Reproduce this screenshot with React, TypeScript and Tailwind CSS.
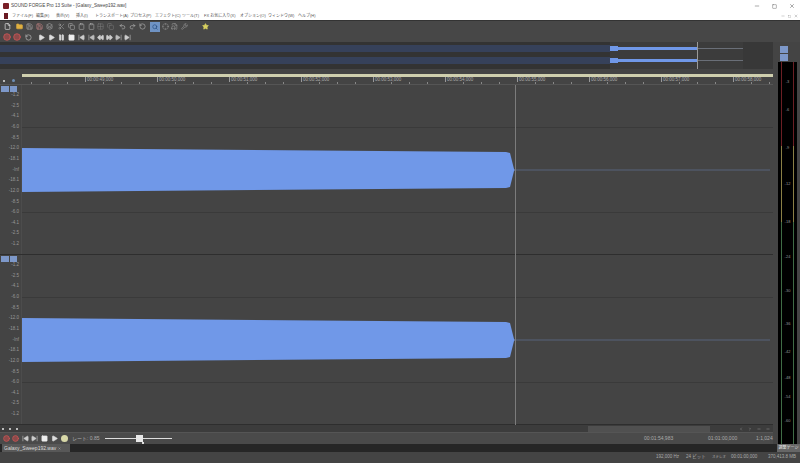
import { ChevronLeft, ChevronRight, Copy, Crosshair, File, FileAudio, Folder, Minus, Pause, Play, Redo2, RotateCcw, Save, Scissors, SkipBack, SkipForward, Square, Undo2, X, Clipboard, Rewind, FastForward, Circle, Search, Wrench, Layers, Grid2x2, Star } from "lucide-react";

const menus = [
  ["ファイル(F)", "w-[24px]"],
  ["編集(E)", "w-[20px]"],
  ["表示(V)", "w-[20px]"],
  ["挿入(I)", "w-[19px]"],
  ["トランスポート(A)", "w-[35px]"],
  ["プロセス(P)", "w-[25px]"],
  ["エフェクト(C)", "w-[27px]"],
  ["ツール(T)", "w-[22px]"],
  ["FX お気に入り(X)", "w-[36px]"],
  ["オプション(O)", "w-[28px]"],
  ["ウィンドウ(W)", "w-[30px]"],
  ["ヘルプ(H)", "w-[24px]"],
];

const rulerTimes = ["", "00:00:49,000", "00:00:50,000", "00:00:51,000", "00:00:52,000", "00:00:53,000", "00:00:54,000", "00:00:55,000", "00:00:56,000", "00:00:57,000", "00:00:58,000"];
const dbLabels = ["-1.2", "-2.5", "-4.1", "-6.0", "-8.5", "-12.0", "-18.1", "-Inf", "-18.1", "-12.0", "-8.5", "-6.0", "-4.1", "-2.5", "-1.2"];
const meterTicks = [
  { y: 18, label: "-3" }, { y: 46, label: "-6" }, { y: 84, label: "-9" }, { y: 120, label: "-12" },
  { y: 158, label: "-18" }, { y: 193, label: "-24" }, { y: 227, label: "-30" }, { y: 260, label: "-36" },
  { y: 288, label: "-42" }, { y: 314, label: "-48" }, { y: 333, label: "-54" }, { y: 357, label: "-60" },
];

function Channel() {
  return (
    <div className="relative flex h-[170px] border-b border-[#2e2e2e] bg-[#444444]">
      <div className="absolute left-[1px] top-[1px] flex gap-[1px]">
        <div className="h-[6px] w-[8px] bg-[#7d98c9]" />
        <div className="h-[6px] w-[7px] bg-[#7d98c9]" />
      </div>
      <div className="flex w-[22px] shrink-0 flex-col border-r border-[#4c4c4c] pt-[5px]">
        {dbLabels.map((l, i) => (
          <div key={i} className="flex h-[10.66px] items-center justify-end pr-[2px] text-[4.5px] text-[#989898]">{l}</div>
        ))}
      </div>
      <svg width="751" height="170" viewBox="0 0 751 170" className="block">
        <line x1="0" y1="42.5" x2="751" y2="42.5" stroke="#3a3a3a" />
        <line x1="0" y1="127.5" x2="751" y2="127.5" stroke="#3a3a3a" />
        <line x1="493" y1="85" x2="748" y2="85" stroke="#56637a" />
        <path d="M0 63 L484 67 L488 68 L492 84 L493 85 L492 86 L488 102 L484 103 L0 107 Z" fill="#7098e8" />
      </svg>
    </div>
  );
}

export default function App() {
  const ic = "h-[7px] w-[7px] shrink-0";
  return (
    <div className="flex h-[463px] w-[800px] flex-col overflow-hidden bg-[#444444] font-['Liberation_Sans','Noto_Sans_CJK_JP',sans-serif] text-[#c8c8c8]">
      {/* title + menu */}
      <div className="flex h-[12px] items-center bg-white pl-[3px] pr-[5px] text-[4.6px] text-[#444]">
        <div className="mr-[2px] h-[6px] w-[6px] rounded-[1px] bg-[#7a1f28]" />
        <span>SOUND FORGE Pro 13 Suite - [Galaxy_Sweep192.wav]</span>
        <div className="ml-auto flex items-center gap-[12px] text-[#555]">
          <Minus className="h-[6px] w-[6px]" />
          <Square className="h-[5px] w-[5px]" />
          <X className="h-[6px] w-[6px]" />
        </div>
      </div>
      <div className="flex h-[8px] items-center bg-white pl-[4px] pr-[2px] text-[4px] leading-none text-[#555]">
        <div className="mr-[4px] h-[6px] w-[4px] bg-[#6a1a22]" />
        {menus.map(([m, w]) => (
          <span key={m} className={`whitespace-nowrap ${w}`}>{m}</span>
        ))}
        <div className="ml-auto flex items-center gap-[3px] text-[#777]">
          <Minus className="h-[4px] w-[4px]" />
          <Square className="h-[3px] w-[3px]" />
          <X className="h-[4px] w-[4px]" />
        </div>
      </div>

      {/* toolbars */}
      <div className="flex h-[12px] items-center border-t border-[#333] bg-[#474747] pl-[4px]">
        <File className={`${ic} mr-[5px] text-white`} />
        <Folder className={`${ic} mr-[3px] fill-[#e0b040] text-[#e0b040]`} />
        <Save className={`${ic} mr-[3px] text-[#aaa]`} />
        <Save className={`${ic} mr-[3px] text-[#d08a8a]`} />
        <Layers className={`${ic} mr-[5px] text-[#aaa]`} />
        <Scissors className={`${ic} mr-[3px] text-[#999]`} />
        <Copy className={`${ic} mr-[3px] text-[#aaa]`} />
        <Clipboard className={`${ic} mr-[3px] text-[#aaa]`} />
        <Clipboard className={`${ic} mr-[2px] text-[#aaa]`} />
        <Grid2x2 className={`${ic} mr-[3px] text-[#777]`} />
        <Copy className={`${ic} mr-[5px] text-[#777]`} />
        <Undo2 className={`${ic} mr-[3px] text-[#bbb]`} />
        <Redo2 className={`${ic} mr-[3px] text-[#bbb]`} />
        <RotateCcw className={`${ic} mr-[4px] text-[#bbb]`} />
        <div className="mr-[2px] flex h-[10px] w-[10px] items-center justify-center bg-[#6f93c4]">
          <Search className="h-[6px] w-[6px] text-[#123a70]" />
        </div>
        <Crosshair className={`${ic} mr-[2px] text-[#888]`} />
        <FileAudio className={`${ic} mr-[3px] text-[#999]`} />
        <Wrench className={`${ic} mr-[14px] text-[#999]`} />
        <Star className={`${ic} fill-[#d8d060] text-[#d8d060]`} />
      </div>
      <div className="flex h-[10px] items-center bg-[#474747] pl-[3px]">
        <Circle className="mr-[2px] h-[8px] w-[8px] fill-[#8c4a4a] text-[#e05a5a]" />
        <Circle className="mr-[4px] h-[8px] w-[8px] fill-[#8c4a4a] text-[#e05a5a]" />
        <RotateCcw className={`${ic} mr-[6px] text-[#ccc]`} />
        <Play className={`${ic} mr-[3px] fill-[#ddd] text-[#ddd]`} />
        <Play className={`${ic} mr-[3px] fill-[#ddd] text-[#ddd]`} />
        <Pause className={`${ic} mr-[3px] fill-[#ddd] text-[#ddd]`} />
        <Square className={`${ic} mr-[3px] fill-[#eee] text-[#eee]`} />
        <SkipBack className={`${ic} mr-[3px] fill-[#ccc] text-[#ccc]`} />
        <SkipBack className={`${ic} mr-[2px] fill-[#bbb] text-[#bbb]`} />
        <Rewind className={`${ic} mr-[2px] fill-[#ccc] text-[#ccc]`} />
        <FastForward className={`${ic} mr-[2px] fill-[#ccc] text-[#ccc]`} />
        <SkipForward className={`${ic} mr-[2px] fill-[#bbb] text-[#bbb]`} />
        <SkipForward className={`${ic} fill-[#ccc] text-[#ccc]`} />
      </div>

      <div className="flex h-[402px]">
        {/* left: overview, ruler, channels */}
        <div className="flex w-[773px] flex-col">
          <svg width="773" height="27" viewBox="0 0 773 27" className="block shrink-0">
            <rect width="773" height="27" fill="#333333" />
            <rect y="3" width="610" height="7" fill="#36415a" />
            <rect y="15" width="610" height="7" fill="#36415a" />
            <rect x="610" width="133" height="27" fill="#3c3c3c" />
            <rect x="743" width="30" height="27" fill="#383838" />
            <rect x="610" y="5" width="87" height="3" fill="#7098e8" />
            <rect x="610" y="17" width="87" height="3" fill="#7098e8" />
            <rect x="610" y="4" width="8" height="5" fill="#7098e8" />
            <rect x="610" y="16" width="8" height="5" fill="#7098e8" />
            <line x1="697" y1="6.5" x2="743" y2="6.5" stroke="#6a6f78" />
            <line x1="697" y1="18.5" x2="743" y2="18.5" stroke="#6a6f78" />
            <line x1="697.5" y1="0" x2="697.5" y2="27" stroke="#999" />
          </svg>
          <div className="h-[5px] shrink-0" />
          <div className="ml-[22px] h-[3px] shrink-0 bg-[#cfcfae]" />
          <div className="relative flex h-[8px] shrink-0 overflow-hidden border-b border-[#555] pl-[13px]">
            <div className="absolute left-[3px] top-[3px] h-[2px] w-[2px] bg-[#bbb]" />
            <div className="absolute left-[12px] top-[2px] h-[3px] w-[3px] rounded-full bg-[#6d8fb8]" />
            {rulerTimes.map((t, i) => (
              <div key={i} className="relative h-full w-[72px] shrink-0">
                {t && <span className="absolute left-0 top-0 border-l border-[#999] pl-[1px] text-[4.5px] leading-[5px] text-[#aaa]">{t}</span>}
                <div className="absolute bottom-0 left-[18px] h-[2px] w-[1px] bg-[#888]" />
                <div className="absolute bottom-0 left-[36px] h-[2px] w-[1px] bg-[#888]" />
                <div className="absolute bottom-0 left-[54px] h-[2px] w-[1px] bg-[#888]" />
              </div>
            ))}
          </div>
          <div className="relative">
            <Channel />
            <Channel />
            <div className="absolute bottom-0 left-[515px] top-0 w-[1px] bg-[#7c7c7c]" />
          </div>
          <div className="flex h-[7px] shrink-0 items-center bg-[#3c3c3c] pl-[2px] pr-[3px]">
            <div className="flex gap-[5px] text-[#bbb]">
              <div className="h-[2px] w-[2px] bg-[#bbb]" />
              <div className="h-[2px] w-[2px] bg-[#bbb]" />
              <div className="h-[2px] w-[2px] bg-[#bbb]" />
            </div>
            <div className="ml-[570px] h-[6px] w-[122px] bg-[#505050]" />
            <div className="ml-auto flex gap-[5px]">
              <ChevronLeft className="h-[4px] w-[4px] text-[#bbb]" />
              <ChevronRight className="h-[4px] w-[4px] text-[#bbb]" />
              <Minus className="h-[4px] w-[4px] text-[#bbb]" />
              <Minus className="h-[4px] w-[4px] text-[#bbb]" />
            </div>
          </div>
          <div className="flex h-[12px] shrink-0 items-center border-t border-[#555] bg-[#4a4a4a] pl-[3px] text-[5px] text-[#aaa]">
            <Circle className="mr-[2px] h-[7px] w-[7px] fill-[#8c4a4a] text-[#e05a5a]" />
            <Circle className="mr-[3px] h-[7px] w-[7px] fill-[#8c4a4a] text-[#e05a5a]" />
            <SkipBack className={`${ic} mr-[2px] fill-[#ccc] text-[#ccc]`} />
            <SkipForward className={`${ic} mr-[3px] fill-[#ccc] text-[#ccc]`} />
            <Square className={`${ic} mr-[3px] fill-[#eee] text-[#eee]`} />
            <Play className={`${ic} mr-[3px] fill-[#ddd] text-[#ddd]`} />
            <div className="mr-[4px] h-[7px] w-[7px] rounded-full bg-[#d8d8a8]" />
            <span className="w-[34px] whitespace-nowrap">レート: 0.85</span>
            <div className="relative ml-[-1px] h-[1px] w-[67px] bg-[#ddd]">
              <div className="absolute -top-[3px] left-[31px] h-[7px] w-[7px] bg-[#e8e8e8]" />
              <div className="absolute left-[37px] top-[4px] h-[2px] w-[2px] bg-[#ddd]" />
            </div>
            <span className="ml-[472px] w-[64px] whitespace-nowrap">00:01:54,983</span>
            <span className="w-[48px] whitespace-nowrap">01:01:00,000</span>
            <span className="whitespace-nowrap">1:1,024</span>
          </div>
        </div>

        {/* right: level meter */}
        <div className="flex w-[27px] flex-col">
          <div className="flex h-[20px] shrink-0 flex-col gap-[1px] pl-[7px] pt-[4px]">
            <div className="h-[7px] w-[8px] bg-[#7d98c9]" />
            <div className="h-[7px] w-[8px] bg-[#7d98c9]" />
          </div>
          <div className="ml-[5px] flex h-[382px] w-[19px] bg-black">
            <div className="relative h-full w-full">
              <div className="absolute left-[3px] top-0 h-[84px] w-[1px] bg-[#6b1f24]" />
              <div className="absolute right-[3px] top-0 h-[84px] w-[1px] bg-[#6b1f24]" />
              <div className="absolute left-[3px] top-[84px] h-[76px] w-[1px] bg-[#8a7f45]" />
              <div className="absolute right-[3px] top-[84px] h-[76px] w-[1px] bg-[#8a7f45]" />
              <div className="absolute bottom-0 left-[3px] top-[160px] w-[1px] bg-[#3f6b45]" />
              <div className="absolute bottom-0 right-[3px] top-[160px] w-[1px] bg-[#3f6b45]" />
              {meterTicks.map((t) => (
                <span key={t.y} className="absolute left-0 right-0 text-center text-[4px] leading-none text-[#999]" style={{ top: t.y }}>{t.label}</span>
              ))}
            </div>
          </div>
        </div>
      </div>

      {/* tab + status */}
      <div className="flex h-[8px] items-center bg-[#262626]">
        <div className="ml-[2px] flex h-full w-[68px] items-center gap-[2px] bg-[#585858] pl-[2px] text-[5px] leading-none text-[#ddd]">
          <span>Galaxy_Sweep192.wav</span>
          <X className="h-[3px] w-[3px]" />
        </div>
        <div className="ml-auto flex h-full w-[23px] items-center justify-center bg-[#666] text-[4px] leading-none text-[#eee]">調整ゲージ</div>
      </div>
      <div className="flex h-[11px] items-center bg-[#444] pl-[656px] text-[4.5px] text-[#aaa]">
        <span className="w-[30px] whitespace-nowrap">192,000 Hz</span>
        <span className="w-[26px] whitespace-nowrap">24 ビット</span>
        <span className="w-[19px] whitespace-nowrap text-[3.5px]">ステレオ</span>
        <span className="w-[37px] whitespace-nowrap">00:01:00,000</span>
        <span className="whitespace-nowrap">370,413.8 MB</span>
      </div>
    </div>
  );
}
